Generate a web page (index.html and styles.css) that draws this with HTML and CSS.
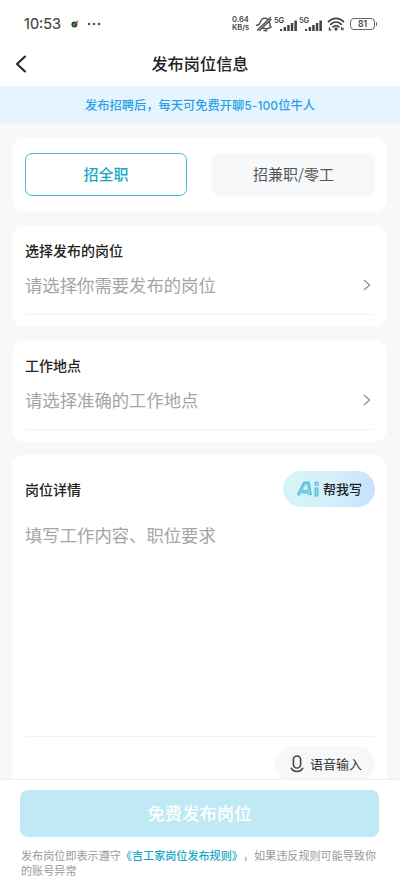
FILE: index.html
```html
<!DOCTYPE html>
<html lang="zh-CN">
<head>
<meta charset="utf-8">
<meta name="viewport" content="width=device-width, initial-scale=1">
<title>发布岗位信息</title>
<link rel="stylesheet" href="styles.css">
</head>
<body>
<div class="app">
  <div class="status">
    <span class="clock">10:53</span>
    <svg class="app-dot" width="10" height="10" viewBox="0 0 10 10"><circle cx="4.4" cy="5.4" r="3" fill="#27452f"/><path d="M3.4 6.6 5.4 4.2" stroke="#51c45c" stroke-width="1.3"/><path d="M6 2.6 8.6 1.8M7 4.4 8 3.4" stroke="#ef7373" stroke-width="1.3"/></svg>
    <svg class="more" width="14" height="4" viewBox="0 0 14 4" fill="#555"><circle cx="2" cy="2" r="1.3"/><circle cx="7" cy="2" r="1.3"/><circle cx="12" cy="2" r="1.3"/></svg>
    <div class="rate"><span>0.64</span><span>KB/s</span></div>
    <svg class="bell" width="18" height="16" viewBox="0 0 18 16" fill="none" stroke="#555" stroke-width="1.5" stroke-linecap="round" stroke-linejoin="round"><path d="M1.500 9.500 4.500 8 6 4.500C7.200 2 10.500 1.500 12.800 3.300M14.300 5.800c.6 2-.2 3 1.700 5.200L12 13 7.500 12M9 14.500l2.500.3M2.500 14 15.500 1.500M4.500 14.500 16 3.500"/></svg>
    <div class="signal"><span>5G</span><svg width="18" height="11" viewBox="0 0 18 11" fill="#444"><rect x="0" y="9" width="2" height="2"/><rect x="3.600" y="7" width="2.500" height="4"/><rect x="7.200" y="5" width="2.500" height="6"/><rect x="10.800" y="3" width="2.500" height="8"/><rect x="14.400" y="0.500" width="2.500" height="10.500"/></svg></div>
    <div class="signal"><span>5G</span><svg width="18" height="11" viewBox="0 0 18 11" fill="#444"><rect x="0" y="9" width="2" height="2"/><rect x="3.600" y="7" width="2.500" height="4"/><rect x="7.200" y="5" width="2.500" height="6"/><rect x="10.800" y="3" width="2.500" height="8"/><rect x="14.400" y="0.500" width="2.500" height="10.500"/></svg></div>
    <svg class="wifi" width="18" height="14" viewBox="0 0 18 14" fill="none" stroke="#444" stroke-width="1.700" stroke-linecap="round"><path d="M1.500 4.600C6 .2 12 .2 16.500 4.600M3.700 7.300c3.200-3 7.400-3 10.600 0M6 9.900c1.900-1.700 4.100-1.700 6 0"/><circle cx="9" cy="12" r=".8" fill="#444"/><path d="M2.500 10.500v2M2 12.800h2M14.500 10.500v2M16 11v2" stroke-width="1.200"/></svg>
    <div class="battery"><span>81</span></div>
  </div>
  <header class="nav">
    <svg class="back" width="12" height="18" viewBox="0 0 12 18" fill="none" stroke="#222" stroke-width="2" stroke-linecap="round" stroke-linejoin="round"><path d="M10 1.500 2 9l8 7.500"/></svg>
    <h1>发布岗位信息</h1>
  </header>
  <div class="notice">发布招聘后，每天可免费开聊<span class="num">5-100</span>位牛人</div>
  <main class="content">
    <section class="card tabs">
      <div class="tab active">招全职</div>
      <div class="tab">招兼职/零工</div>
    </section>
    <section class="card field">
      <h2>选择发布的岗位</h2>
      <div class="select"><span>请选择你需要发布的岗位</span><svg width="8" height="12" viewBox="0 0 8 12" fill="none" stroke="#999" stroke-width="1.500"><path d="m1 1 5.500 5L1 11"/></svg></div>
    </section>
    <section class="card field">
      <h2>工作地点</h2>
      <div class="select"><span>请选择准确的工作地点</span><svg width="8" height="12" viewBox="0 0 8 12" fill="none" stroke="#999" stroke-width="1.500"><path d="m1 1 5.500 5L1 11"/></svg></div>
    </section>
    <section class="card detail">
      <div class="detail-head">
        <h2>岗位详情</h2>
        <div class="ai"><svg width="24" height="16" viewBox="0 0 24 16" fill="none" stroke-linejoin="round"><path d="M2.300 14.200 8.500 2.300h3.700L14.300 14.200M6 10.800h7.500" stroke="#59bfdc" stroke-width="3.400"/><path d="M3 13.700 9.200 3h2.300L13.800 13.700M6.500 10.800h6" stroke="#92dfeb" stroke-width="1.100"/><path d="M20.500 6.500v9" stroke="#59bfdc" stroke-width="4"/><path d="M20.500 7.500v7" stroke="#92dfeb" stroke-width="1.400"/><path d="M19.200 1.300h2.800v2.800h-2.800z" stroke="#59bfdc" stroke-width="1.300"/></svg><span>帮我写</span></div>
      </div>
      <div class="textarea">填写工作内容、职位要求</div>
      <div class="voice"><svg width="14" height="18" viewBox="0 0 14 18" fill="none" stroke="#444" stroke-width="1.600" stroke-linecap="round"><rect x="3.400" y="1" width="7.200" height="12" rx="3.600"/><path d="M1.300 13.300c2.500 4.200 8.900 4.200 11.400 0"/></svg><span>语音输入</span></div>
    </section>
  </main>
  <footer class="footer">
    <div class="submit">免费发布岗位</div>
    <p>发布岗位即表示遵守<span class="rules">《吉工家岗位发布规则》</span>，如果违反规则可能导致你<br>的账号异常</p>
  </footer>
</div>
</body>
</html>
```
FILE: styles.css
```css
* { box-sizing: border-box; }
body { margin: 0; font-family: "Noto Sans CJK SC", sans-serif; color: #222; background: #fff; }
h1, h2, p { margin: 0; font-weight: 500; }
svg { display: block; flex: none; }
.app { width: 400px; height: 889px; display: flex; flex-direction: column; overflow: hidden; }

.status { height: 42px; padding: 6px 25px 0 24px; display: flex; align-items: center; flex: none; color: #444; font-family: Inter, sans-serif; }
.clock { font-size: 14.5px; line-height: 20px; width: 46px; letter-spacing: 0; -webkit-text-stroke: 0.2px #444; }
.more { margin-left: 7px; }
.rate { margin-left: auto; width: 21px; display: flex; flex-direction: column; font-size: 7.5px; line-height: 8px; font-weight: 600; white-space: nowrap; }
.bell { margin-left: 2px; }
.signal { display: flex; align-items: flex-end; width: 25px; height: 14px; margin-left: 1px; }
.signal span { font-size: 7.5px; line-height: 8px; font-weight: 600; align-self: flex-start; width: 10px; letter-spacing: -0.3px; }
.signal svg { margin-left: -4px; }
.signal + .signal { margin-left: 0; }
.wifi { margin-left: 3px; }
.battery { margin-left: 5px; width: 25px; height: 12px; border: 1.5px solid #666; border-radius: 4px; display: flex; align-items: center; justify-content: center; font-size: 8.5px; line-height: 9px; font-weight: 600; position: relative; }
.battery::after { content: ""; position: absolute; right: -3px; top: 3px; width: 1.5px; height: 4px; background: #666; border-radius: 1px; }

.nav { height: 44px; flex: none; display: grid; grid-template-columns: 40px 1fr 40px; align-items: center; }
.back { margin-left: 15px; }
.nav h1 { font-size: 16.2px; line-height: 24px; padding-bottom: 2px; text-align: center; }
.notice { height: 38px; flex: none; background: #e6f4ff; color: #2ba1e5; font-size: 12.25px; line-height: 38px; text-align: center; font-weight: 500; }
.num { font-family: Inter, sans-serif; font-size: 12px; letter-spacing: 0.1px; }

.content { flex: 1; min-height: 0; overflow: hidden; background: #f6f8fa; padding: 13px 13px 0 12px; display: flex; flex-direction: column; gap: 13px; }
.card { background: #fff; border-radius: 13px; flex: none; }
.card h2 { font-size: 14px; line-height: 20px; }
.tabs { height: 75px; padding: 16px 12px 0 13px; display: grid; grid-template-columns: 162px 163px; justify-content: space-between; align-items: start; }
.tab { height: 43px; border-radius: 7px; background: #f6f8fa; color: #555; font-size: 15px; line-height: 42px; text-align: center; }
.tab.active { background: #fff; border: 1.5px solid #42b8d2; color: #18a7c8; line-height: 40px; font-weight: 500; }
.field { height: 102px; padding: 15px 13px 0; }
.select { height: 55px; padding-bottom: 5px; border-bottom: 1px solid #f2f3f4; display: flex; align-items: center; justify-content: space-between; color: #a5a5a5; font-size: 17.35px; line-height: 24px; }
.select svg { margin-right: 3px; }
.detail { height: 340px; padding: 16px 12px 0 13px; display: flex; flex-direction: column; }
.detail-head { display: flex; align-items: center; justify-content: space-between; height: 36px; }
.ai { width: 92px; height: 36px; border-radius: 18px; background: linear-gradient(100deg, #d6f6f5, #d2f0fa 55%, #c8deff); display: flex; align-items: center; gap: 3px; padding-left: 13px; font-size: 13px; line-height: 20px; font-weight: 500; }
.textarea { height: 230px; padding-top: 15px; border-bottom: 1px solid #f2f3f4; color: #a5a5a5; font-size: 17.35px; line-height: 26px; }
.voice { margin-top: 9px; align-self: flex-end; width: 100px; height: 36px; border-radius: 18px; background: #f6f8fa; display: flex; align-items: center; gap: 6px; padding-left: 15px; font-size: 13px; line-height: 20px; color: #333; }

.footer { height: 110px; flex: none; background: #fff; border-top: 1px solid #f0f1f2; padding: 10px 21px 0 20px; }
.submit { height: 47px; border-radius: 8px; background: #bee9f5; color: #fff; font-size: 17.35px; line-height: 46px; text-align: center; font-weight: 500; }
.footer p { padding: 11px 0 0 1px; width: 362px; font-size: 11.1px; line-height: 15px; font-weight: 400; color: #999; white-space: nowrap; text-spacing-trim: space-all; }
.rules { color: #18a7c8; font-weight: 500; }
```
